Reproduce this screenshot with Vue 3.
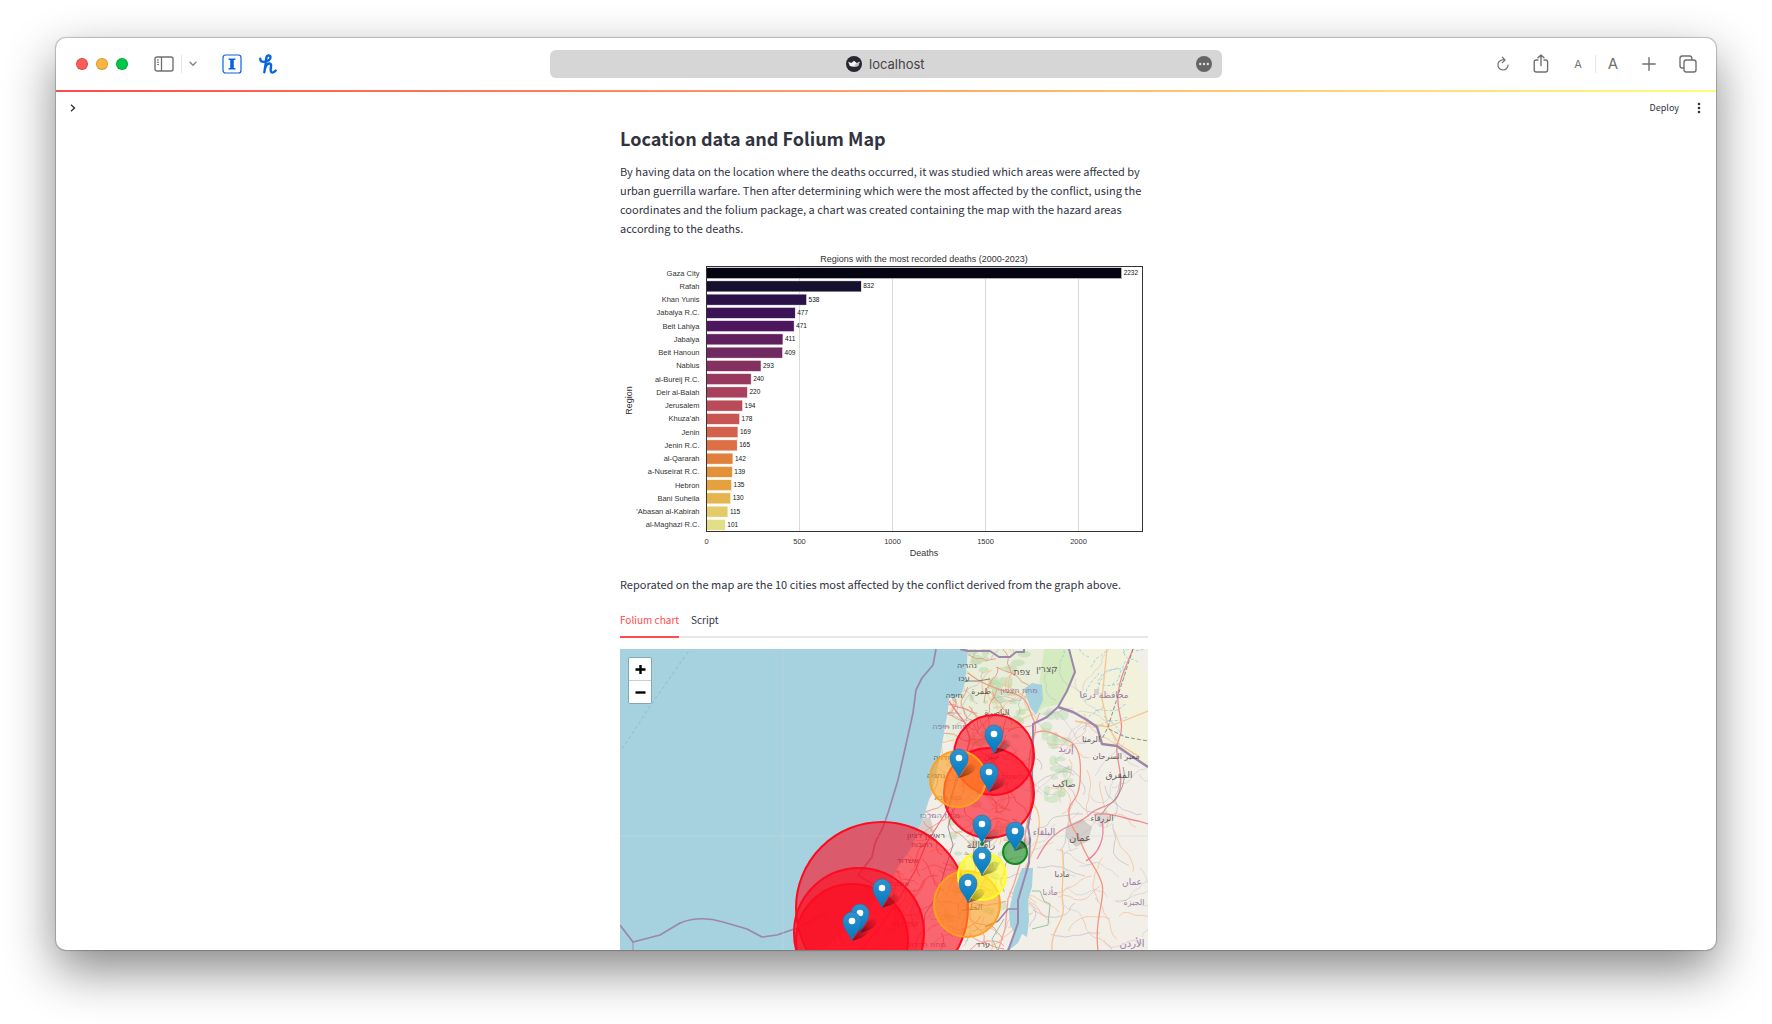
<script setup>
import { ref } from 'vue'

const address = ref('localhost')
const activeTab = ref('Folium chart')
const tabs = ['Folium chart', 'Script']

const plot = { left: 173, right: 1045, top: 37, bottom: 567, perDeath: 0.372, step: 26.5 }
const ticks = [0, 500, 1000, 1500, 2000]
const regions = [
  ['Gaza City', 2232, '#050412'],
  ['Rafah', 832, '#160f2d'],
  ['Khan Yunis', 538, '#2a1147'],
  ['Jabalya R.C.', 477, '#3c1357'],
  ['Beit Lahiya', 471, '#4d165e'],
  ['Jabalya', 411, '#602060'],
  ['Beit Hanoun', 409, '#712962'],
  ['Nablus', 293, '#843162'],
  ['al-Bureij R.C.', 240, '#97385f'],
  ['Deir al-Balah', 220, '#a9405c'],
  ['Jerusalem', 194, '#b94a58'],
  ['Khuza\'ah', 178, '#c95552'],
  ['Jenin', 169, '#d4614c'],
  ['Jenin R.C.', 165, '#dd7044'],
  ['al-Qararah', 142, '#e1803c'],
  ['a-Nuseirat R.C.', 139, '#e39138'],
  ['Hebron', 135, '#e4a13e'],
  ['Bani Suheila', 130, '#e4b44e'],
  ["'Abasan al-Kabirah", 115, '#e3cb68'],
  ['al-Maghazi R.C.', 101, '#e2df88'],
].map(([name, deaths, color], i) => ({
  name,
  deaths,
  color,
  mid: plot.top + plot.step * (i + 0.5),
  width: deaths * plot.perDeath,
}))

const hazards = [
  [262, 259, 86, '#ff0a20'],
  [239, 284, 65, '#ff0a20'],
  [232, 291, 56, '#ff0a20'],
  [374, 106, 40, '#ff0a20'],
  [369, 144, 45, '#ff0a20'],
  [338, 130, 28, '#ffa020'],
  [347, 255, 33, '#ffa020'],
  [362, 227, 24, '#ffff20'],
  [395, 203, 12, '#128a20'],
  [362, 195, 1, '#128a20'],
]
const pins = [
  [374, 105], [339, 129], [369, 143], [362, 195], [395, 202],
  [362, 227], [348, 254], [262, 259], [240, 284], [232, 292],
]

const black = '#4a4545'
const purple = '#8d6a9c'
const places = [
  [347, 19, 'נהריה', black, 8], [344, 32, 'עכו', black, 8], [402, 26, 'צפת', black, 9],
  [427, 23, 'קצרין', black, 9], [334, 49, 'חיפה', black, 8], [361, 45, 'طمرة', black, 8],
  [399, 44, 'מחוז הצפון', purple, 8], [330, 80, 'מחוז חיפה', purple, 8], [377, 66, 'الناصرة', black, 8],
  [323, 111, 'חדרה', black, 8], [316, 129, 'נתניה', black, 8], [372, 110, 'جنين', black, 8],
  [484, 49, 'محافظة درعا', purple, 9], [471, 93, 'الرمثا', black, 8], [446, 103, 'إربد', purple, 10],
  [496, 110, 'مغير السرحان', black, 8], [444, 138, 'صاكب', black, 9], [499, 129, 'المفرق', black, 9],
  [390, 130, 'השומרון', purple, 8], [328, 151, 'כפר סבא', black, 7], [320, 169, 'מחוז המרכז', purple, 8],
  [306, 189, 'ראשון לציון', black, 8], [482, 172, 'الزرقاء', black, 8], [424, 186, 'البلقاء', purple, 9],
  [460, 192, 'عمان', black, 10], [361, 199, 'رام الله', black, 9], [367, 217, 'ירושלים', purple, 8],
  [288, 214, 'אשדוד', black, 8], [302, 198, 'רחובות', black, 7], [278, 237, 'אשקלון', black, 7],
  [442, 228, 'مادبا', black, 8], [430, 246, 'مأدبا', purple, 8], [512, 236, 'عمان', purple, 9],
  [514, 256, 'الجيزة', purple, 8], [352, 261, 'الخليل', black, 8], [285, 277, 'קריית גת', black, 7],
  [306, 298, 'מחוז הדרום', purple, 8], [363, 298, 'ערד', black, 8], [512, 298, 'الأردن', purple, 10],
]

// Small repeatable generator for the minor roads and vegetation patches.
let seed = 71
const rand = () => {
  seed = (seed * 16807) % 2147483647
  return seed / 2147483647
}
const wander = (x0, y0, steps, size) => {
  let x = x0
  let y = y0
  let angle = rand() * 6.28
  let d = `M${x.toFixed(0)} ${y.toFixed(0)}`
  for (let i = 0; i < steps; i++) {
    angle += (rand() - 0.5) * 1.3
    x += Math.cos(angle) * size
    y += Math.sin(angle) * size
    d += `L${x.toFixed(1)} ${y.toFixed(1)}`
  }
  return d
}
const scatter = (count, x, w, y, h, steps, size) =>
  Array.from({ length: count }, () => wander(x + rand() * w, y + rand() * h, steps, size)).join('')

const westRoads = scatter(85, 270, 130, 0, 300, 8, 5)
const westMinor = scatter(80, 250, 150, 0, 300, 6, 5)
const westGrey = scatter(45, 270, 130, 0, 300, 8, 4)
const southRoads = scatter(20, 200, 110, 190, 110, 8, 6)
const eastRoads = scatter(22, 410, 110, 80, 210, 8, 6)
const eastMinor = scatter(34, 410, 115, 0, 300, 9, 5)
const eastBorders = scatter(14, 405, 115, 120, 180, 10, 5)
const streams = scatter(14, 430, 90, 0, 90, 7, 5)
const woods = Array.from({ length: 90 }, () => {
  const north = rand() < 0.55
  return [
    (north ? 340 : 325) + rand() * 65,
    north ? rand() * 95 : 90 + rand() * 180,
    2 + rand() * 5,
    1 + rand() * 4,
  ]
})
const eastWoods = Array.from({ length: 30 }, () => [
  425 + rand() * 24, 62 + rand() * 90, 2 + rand() * 5, 2 + rand() * 4,
])
</script>

<template>
  <div class="desktop">
    <div class="window">
      <header class="toolbar">
        <div class="tools">
          <div class="lights">
            <button class="light red" aria-label="Close"></button>
            <button class="light amber" aria-label="Minimise"></button>
            <button class="light green" aria-label="Zoom"></button>
          </div>
          <button class="icon sidebar" aria-label="Sidebar">
            <svg width="20" height="16" viewBox="0 0 20 16" fill="none" stroke="#707070">
              <rect x="1" y="1" width="18" height="14" rx="2" stroke-width="1.4" />
              <path d="M7.5 1v14" stroke-width="1.3" />
              <path d="M3 4h2M3 6.300h2M3 8.600h2" />
            </svg>
          </button>
          <span class="rule"></span>
          <button class="icon chevron" aria-label="Tab groups">
            <svg width="8" height="6" viewBox="0 0 8 6" fill="none" stroke="#858585" stroke-width="1.400" stroke-linecap="round" stroke-linejoin="round">
              <path d="M1 1.300L4 4.300L7 1.300" />
            </svg>
          </button>
          <button class="icon paper" aria-label="Instapaper">
            <svg width="20" height="20" viewBox="0 0 20 20">
              <rect x="1" y="1" width="18" height="18" rx="2.600" fill="#fff" stroke="#0a63e0" stroke-width="1.200" />
              <path d="M6.500 4.500h7v1.300l-1.700.4v7.600l1.700.4v1.300h-7v-1.300l1.700-.4v-7.600l-1.700-.4z" fill="#0a63e0" />
            </svg>
          </button>
          <button class="icon honey" aria-label="Honey">
            <svg width="18" height="20" viewBox="0 0 18 20" fill="none" stroke="#0a63e0" stroke-linecap="round" stroke-linejoin="round">
              <path d="M1.300 4.800C1.200 7.200 2.800 8 5 7.800C8.800 7.500 11.800 5.600 11.500 3.200C11.200.8 8 .8 7.400 3.600C6.800 6.600 6.600 13 5.300 18.200" stroke-width="2.400" />
              <path d="M6 14C7.200 10.800 9 9.300 10.700 9.500C12.700 9.700 12 12.500 11.700 15C11.400 18.200 12.800 19.200 14.500 18.300C15.600 17.700 16.200 17.200 16.700 16.600" stroke-width="2.400" />
            </svg>
          </button>
        </div>

        <label class="address">
          <svg width="16" height="16" viewBox="0 0 16 16" aria-hidden="true">
            <circle cx="8" cy="8" r="8" fill="#262730" />
            <path d="M2.200 5.700L5.300 6.900L8 4.800L10.700 6.900L13.800 5.700L12.200 10Q8 11.400 3.800 10Z" fill="#f2f2f2" />
            <path d="M9.500 8L13.500 6.100L12.100 10L8.500 10.800Z" fill="#bdbdbd" />
          </svg>
          <input v-model="address" type="text" aria-label="Address" />
          <button class="icon more" aria-label="Page menu">
            <svg width="16" height="16" viewBox="0 0 16 16">
              <circle cx="8" cy="8" r="8" fill="#666" />
              <g fill="#e2e2e2"><circle cx="4.200" cy="8" r="1.200" /><circle cx="8" cy="8" r="1.200" /><circle cx="11.800" cy="8" r="1.200" /></g>
            </svg>
          </button>
        </label>

        <div class="tools end">
          <button class="icon" aria-label="Reload">
            <svg width="14" height="16" viewBox="0 0 14 16" fill="none" stroke="#707070" stroke-width="1.200" stroke-linecap="round" stroke-linejoin="round">
              <path d="M8.500 4A5.100 5.100 0 1 0 12.100 9M6.300 1.200L9 4L6.300 6.700" />
            </svg>
          </button>
          <button class="icon" aria-label="Share">
            <svg width="16" height="20" viewBox="0 0 16 20" fill="none" stroke="#707070" stroke-width="1.400" stroke-linecap="round" stroke-linejoin="round">
              <path d="M5 6H3.200Q1.200 6 1.200 8V16Q1.200 18 3.200 18H12.600Q14.600 18 14.600 16V8Q14.600 6 12.600 6H11M8 11.500V1M5 3.700L8 .9L11 3.700" />
            </svg>
          </button>
          <div class="letters">
            <button class="letter small" aria-label="Smaller text">A</button>
            <span class="rule"></span>
            <button class="letter" aria-label="Larger text">A</button>
          </div>
          <button class="icon" aria-label="New tab">
            <svg width="14" height="14" viewBox="0 0 14 14" stroke="#707070" stroke-width="1.400" stroke-linecap="round">
              <path d="M7 .8V13.200M.8 7H13.200" />
            </svg>
          </button>
          <button class="icon" aria-label="Tab overview">
            <svg width="18" height="18" viewBox="0 0 18 18" fill="none" stroke="#707070" stroke-width="1.400">
              <path d="M5 13H3.300Q1 13 1 10.700V3.300Q1 1 3.300 1H10.500Q12.800 1 12.800 3.300V5" />
              <rect x="5" y="5" width="12" height="12" rx="2.300" />
            </svg>
          </button>
        </div>
      </header>

      <div class="decoration"></div>

      <div class="appbar">
        <button class="icon" aria-label="Open sidebar">
          <svg width="6" height="8" viewBox="0 0 6 8" fill="none" stroke="#31333f" stroke-width="1.400"><path d="M1 .8L4.500 4L1 7.200" /></svg>
        </button>
        <div class="actions">
          <button class="deploy">Deploy</button>
          <button class="icon" aria-label="Menu">
            <svg width="4" height="12" viewBox="0 0 4 12" fill="#31333f"><circle cx="2" cy="2" r="1.300" /><circle cx="2" cy="6" r="1.300" /><circle cx="2" cy="10" r="1.300" /></svg>
          </button>
        </div>
      </div>

      <main class="scroller">
        <div class="page">
          <h2>Location data and Folium Map</h2>
          <p>
            By having data on the location where the deaths occurred, it was studied which areas were affected by
            urban guerrilla warfare. Then after determining which were the most affected by the conflict, using the
            coordinates and the folium package, a chart was created containing the map with the hazard areas
            according to the deaths.
          </p>

          <svg class="chart" viewBox="0 0 1056 636" role="img" aria-label="Regions with the most recorded deaths (2000-2023)">
            <text class="label" x="608" y="28" text-anchor="middle">Regions with the most recorded deaths (2000-2023)</text>
            <path
              v-for="t in ticks"
              :key="t"
              :d="`M${plot.left + t * plot.perDeath} ${plot.top}V${plot.bottom}`"
              stroke="#d9d9d9"
              stroke-width="2"
            />
            <g v-for="r in regions" :key="r.name">
              <rect :x="plot.left" :y="r.mid - 11" :width="r.width" height="22" :fill="r.color" stroke="#fff" stroke-width="1" />
              <text class="tick" x="159" :y="r.mid + 5" text-anchor="end">{{ r.name }}</text>
              <text class="count" :x="plot.left + r.width + 4" :y="r.mid + 4">{{ r.deaths }}</text>
            </g>
            <rect :x="plot.left" :y="plot.top" :width="plot.right - plot.left" :height="plot.bottom - plot.top" fill="none" stroke="#333" stroke-width="2" />
            <text v-for="t in ticks" :key="t" class="tick" :x="plot.left + t * plot.perDeath" y="592" text-anchor="middle">{{ t }}</text>
            <text class="label" x="608" y="615" text-anchor="middle">Deaths</text>
            <text class="label" text-anchor="middle" transform="translate(24 305) rotate(-90)">Region</text>
          </svg>

          <p>Reporated on the map are the 10 cities most affected by the conflict derived from the graph above.</p>

          <div class="tabs" role="tablist">
            <button
              v-for="tab in tabs"
              :key="tab"
              role="tab"
              :aria-selected="tab === activeTab"
              :class="{ active: tab === activeTab }"
              @click="activeTab = tab"
            >{{ tab }}</button>
          </div>

          <div class="map">
            <svg viewBox="0 0 528 302" role="img" aria-label="Map of the hazard areas">
              <defs>
                <clipPath id="land">
                  <path d="M348 0L347 16L345 34L342 44L335 50L329 48L328 61L325 78L320 108L313 138L303 170L290 201L278 218L270 234L236 275L200 302H528V0Z" />
                </clipPath>
                <linearGradient id="pin" x1="0" y1="0" x2="0" y2="1">
                  <stop offset="0" stop-color="#3093cf" />
                  <stop offset="1" stop-color="#0078be" />
                </linearGradient>
                <linearGradient id="shade" x1="0" y1="1" x2="1" y2="0">
                  <stop offset="0" stop-color="#000" stop-opacity=".5" />
                  <stop offset="1" stop-color="#000" stop-opacity="0" />
                </linearGradient>
              </defs>
              <rect width="528" height="302" fill="#a5d2de" />
              <g clip-path="url(#land)" fill="none">
                <rect width="528" height="302" fill="#f2efe9" />
                <path d="M340 0H450L455 23L445 45L425 65L400 75L350 100L325 90Z" fill="#e9eedb" />
                <path d="M424 0H449L455 23L447 42L438 56L424 58L414 66L420 30Z" fill="#d3ebbf" />
                <path d="M450 0H515L520 20L528 24V118L510 106L480 95L474 72L440 60L455 25Z" fill="#f1f1dc" />
                <ellipse v-for="(w, i) in woods" :key="'w' + i" :cx="w[0]" :cy="w[1]" :rx="w[2]" :ry="w[3]" fill="#bbdaab" opacity=".55" />
                <ellipse v-for="(w, i) in eastWoods" :key="'e' + i" :cx="w[0]" :cy="w[1]" :rx="w[2]" :ry="w[3]" fill="#bbdfb4" opacity=".5" />
                <g fill="#d4cfca">
                  <path d="M448 176L462 170L472 178L468 192L456 198L446 188Z" />
                  <path d="M476 166L486 162L490 172L480 178Z" opacity=".7" />
                  <path d="M302 170L310 168L314 182L304 188L298 180Z" />
                  <path d="M474 40h5v6h-5z" />
                </g>
                <path :d="westMinor" stroke="#f5bd8c" stroke-width="1" opacity=".85" />
                <path :d="westRoads" stroke="#f08f80" stroke-width="1" opacity=".85" />
                <path :d="southRoads" stroke="#e8808a" stroke-width=".8" opacity=".7" />
                <path :d="westGrey" stroke="#98909a" stroke-width=".6" opacity=".6" />
                <path :d="eastMinor" stroke="#b9acc0" stroke-width=".7" opacity=".5" />
                <path :d="eastBorders" stroke="#a596ad" stroke-width=".7" opacity=".6" />
                <path :d="eastRoads" stroke="#f3bd9b" stroke-width=".9" opacity=".8" />
                <path :d="streams" stroke="#8fcde2" stroke-width="1" stroke-dasharray="3 2" opacity=".8" />
                <g stroke-width="1.300">
                  <path d="M329 52L336 62L345 74L350 90L345 110L334 140L328 160L318 176L306 195L296 220L280 248L262 275L240 302" stroke="#ee7b88" />
                  <path d="M348 24C360 34 375 40 392 44S408 60 414 72S405 100 410 130S402 180 405 200" stroke="#f39a80" />
                  <path d="M415 84C425 78 440 88 449 92S462 108 460 132S448 150 449 165S456 180 462 196S478 220 482 235S474 268 478 302" stroke="#f3957f" />
                  <path d="M513 0C505 20 500 28 498 45S506 75 499 90S504 120 500 140S480 155 470 165S450 175 440 182S425 195 417 210" stroke="#ee8c92" />
                  <path d="M474 166C488 162 505 170 518 172L528 175" stroke="#ee8c92" />
                  <path d="M482 172C486 190 478 205 466 212" stroke="#ec7fa0" />
                  <path d="M487 0L484 30L482 50L488 78L500 96L520 108M488 78L528 62M455 72L488 78" stroke="#f6c48f" />
                  <path d="M411 152C425 165 418 190 414 200S400 225 396 250" stroke="#f6c48f" />
                  <path d="M442 200C446 220 440 240 443 256S430 280 432 302" stroke="#f6c48f" />
                  <path d="M400 215L394 235L388 250L385 280L378 302" stroke="#f6a595" />
                </g>
                <path d="M513 0L500 40L488 78L482 90M489 80L505 88L528 92" stroke="#777" stroke-width=".8" stroke-dasharray="4 2" />
                <path d="M503 118C508 135 497 150 487 158L482 165" stroke="#8c8c8c" stroke-width=".8" />
                <path d="M340 32L358 32L370 30" stroke="#666" stroke-width=".8" />
                <g stroke="#92c59d" stroke-width="1">
                  <path d="M412 242L420 242L424 252L430 255L428 276L412 280" />
                  <path d="M345 203L352 207L360 208L372 203" />
                  <path d="M384 270L378 280L372 290L378 302" />
                </g>
                <g fill="#a5d2de">
                  <path d="M404 40L412 34L422 36L423 51L416 66L410 58Z" />
                  <path d="M402 219H413L412 238L408 251L409 271L407 288L402 285L398 294L388 302H386L395 285L390 276L389 262L394 240Z" />
                </g>
                <path d="M333 160L328 178L333 196L325 220L318 245L305 265L302 302M328 160L336 130L340 105" stroke="#7d6b80" stroke-width="1" opacity=".7" />
              </g>
              <g fill="none" stroke="#9c86ab" stroke-width="1.700" stroke-linejoin="round">
                <path d="M316 0L313 16L302 29L296 41L293 64L287 91L278 131L268 164L263 178L255 194L252 208L238 226L257 238" />
                <path d="M0 276L13 293L40 286L60 274Q80 266 103 273L127 280L142 288L157 286L177 279L203 266L220 282" />
                <path d="M13 293V302" opacity=".5" />
                <path d="M340 0L348 2H370L379 8H390L396 3H404V0M449 0L455 23L447 42L438 58L427 68L413 75V92L412 125L413 150L408 178L410 190L409 214L398 251L398 274L388 302" stroke-width="2" />
                <path d="M438 58L453 63L467 71L477 78L480 88L482 95L497 97L510 106L528 118" stroke-width="2.400" />
                <path d="M398 260L388 260L378 272L365 278" />
              </g>
              <path d="M68 3L33 53L2 100" fill="none" stroke="#8bb9df" stroke-width="1" stroke-dasharray="3 3" />
              <path d="M163 0V302M0 187H528" stroke="#c8dcdd" stroke-width="1" opacity=".5" />
              <g class="places">
                <text
                  v-for="(p, i) in places"
                  :key="i"
                  :x="p[0]"
                  :y="p[1]"
                  :fill="p[3]"
                  :font-size="p[4]"
                  text-anchor="middle"
                >{{ p[2] }}</text>
              </g>
              <circle
                v-for="(h, i) in hazards"
                :key="'h' + i"
                :cx="h[0]"
                :cy="h[1]"
                :r="h[2]"
                :fill="h[3]"
                fill-opacity=".6"
                :stroke="h[3]"
                stroke-width="2"
              />
              <g v-for="(p, i) in pins" :key="'p' + i" :transform="`translate(${p[0]} ${p[1]})`">
                <path d="M0 0L8 -12Q14 -17 17 -12Q17 -7 9 -3Z" fill="url(#shade)" />
                <path d="M0 0C-1.500 -7 -9 -11 -9 -20A9 9 0 0 1 9 -20C9 -11 1.500 -7 0 0Z" fill="url(#pin)" stroke="#2472a4" stroke-width=".6" />
                <circle cx="0" cy="-20" r="3.300" fill="#fff" />
              </g>
            </svg>
            <div class="zoom">
              <button aria-label="Zoom in"><svg width="11" height="11" viewBox="0 0 11 11" stroke="#000" stroke-width="2.400"><path d="M5.500 1V10M.5 5.500H10.500" /></svg></button>
              <button aria-label="Zoom out"><svg width="11" height="11" viewBox="0 0 11 11" stroke="#000" stroke-width="2.400"><path d="M.5 5.500H10.500" /></svg></button>
            </div>
          </div>
        </div>
      </main>
    </div>
  </div>
</template>

<style>
body {
  margin: 0;
  background: #fff;
}
</style>

<style scoped>
* {
  box-sizing: border-box;
}
.desktop {
  height: 100vh;
  padding: 38px 56px 74px;
  overflow: hidden;
  font-family: "Noto Sans CJK SC", "Noto Sans", sans-serif;
  color: #31333f;
}
.window {
  height: 100%;
  overflow: hidden;
  border-radius: 10px;
  background: #fff;
  box-shadow: 0 0 1px 1px rgba(0, 0, 0, 0.22), 0 20px 50px rgba(0, 0, 0, 0.48);
}
button {
  padding: 0;
  border: 0;
  background: none;
  color: inherit;
  font-family: inherit;
}
svg {
  display: block;
}
.toolbar {
  display: grid;
  grid-template-columns: minmax(0, 1fr) minmax(0, 672px) minmax(0, 1fr);
  align-items: center;
  height: 52px;
}
.tools {
  display: flex;
  align-items: center;
  padding-left: 20px;
}
.tools.end {
  justify-content: flex-end;
  gap: 23px;
  padding: 0 19px 0 0;
}
.lights {
  display: flex;
  gap: 8px;
}
.light {
  width: 12px;
  height: 12px;
  border: 1px solid rgba(0, 0, 0, 0.18);
  border-radius: 50%;
}
.red { background: #ff5b57; }
.amber { background: #fdb640; }
.green { background: #00c748; }
.sidebar { margin-left: 26px; }
.rule {
  width: 1px;
  height: 18px;
  background: #e6e6e6;
}
.sidebar + .rule { margin: 0 7px; }
.paper { margin-left: 25px; }
.honey { margin-left: 17px; }
.address {
  display: grid;
  grid-template-columns: 1fr 56px 1fr;
  align-items: center;
  gap: 7px;
  height: 28px;
  padding: 0 10px 0 32px;
  border-radius: 6px;
  background: #d6d6d6;
}
.address > svg,
.more {
  justify-self: end;
}
.address input {
  width: 100%;
  padding: 0;
  border: 0;
  outline: 0;
  background: none;
  color: #444;
  font: 13px/18px Inter, sans-serif;
}
.letters {
  display: flex;
  align-items: center;
  gap: 11px;
}
.letter {
  width: 12px;
  color: #707070;
  font: 15px/18px Inter, sans-serif;
}
.letter.small { font-size: 11px; }
.decoration {
  height: 2px;
  background: linear-gradient(90deg, #ff4b4b, #fffd80);
}
.appbar {
  display: flex;
  align-items: center;
  justify-content: space-between;
  height: 32px;
  padding: 0 15px 0 14px;
}
.actions {
  display: flex;
  align-items: center;
  gap: 18px;
}
.deploy {
  font-size: 9px;
  line-height: 16px;
}
.scroller {
  padding-right: 4px;
}
.page {
  width: 528px;
  max-width: 100%;
  margin: 0 auto;
}
h2 {
  margin: 0 0 10px;
  font-size: 18px;
  line-height: 28px;
  font-weight: 700;
}
p {
  margin: 0;
  font-size: 11px;
  line-height: 19px;
}
.chart {
  width: 100%;
  margin: 10px 0 9px;
  font-family: "Liberation Sans", Arial, sans-serif;
  fill: #333;
}
.label { font-size: 18px; }
.tick { font-size: 15px; }
.count { font-size: 13px; fill: #111; }
.tabs {
  display: flex;
  gap: 12px;
  margin: 16px 0 11px;
  height: 28px;
  border-bottom: 2px solid #e6e7ea;
}
.tabs button {
  height: 28px;
  padding-bottom: 6px;
  border-bottom: 2px solid transparent;
  font-size: 10px;
  line-height: 16px;
}
.tabs .active {
  border-color: #ff4b4b;
  color: #ff4b4b;
}
.map {
  position: relative;
}
.places {
  font-family: "DejaVu Sans", sans-serif;
  opacity: 0.85;
}
.zoom {
  position: absolute;
  top: 8px;
  left: 8px;
  width: 24px;
  border: 1px solid #86a8b3;
  border-radius: 2px;
  background: #fff;
}
.zoom button {
  display: grid;
  place-items: center;
  width: 100%;
  height: 22px;
}
.zoom button + button {
  border-top: 1px solid #ccc;
  height: 23px;
}
</style>
